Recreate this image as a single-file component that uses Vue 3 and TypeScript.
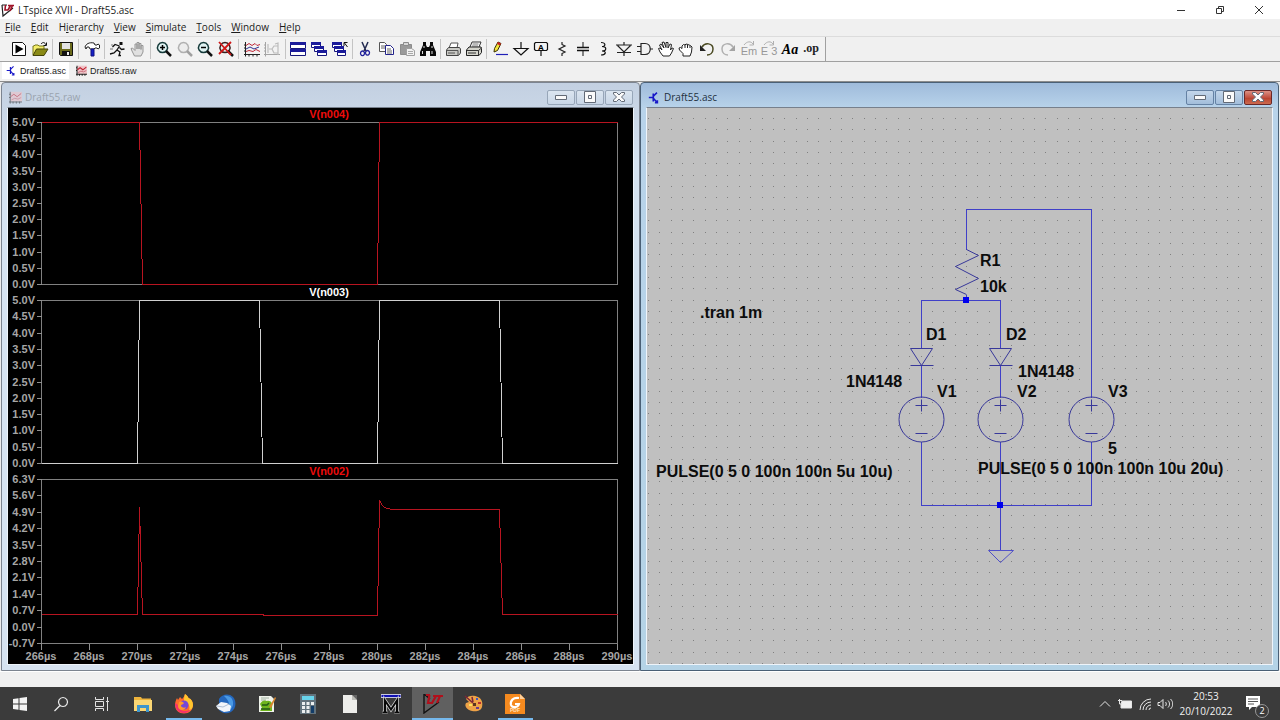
<script setup lang="ts">
import { computed, ref } from 'vue'

interface Shape {
  d?: string
  fill?: string
  stroke?: string
  w?: number
  text?: string
  x?: number
  y?: number
  size?: number
  font?: string
}

const K = '#111'
const N = '#16167a'
const G = '#a4a4a4'

const icons: Record<string, Shape[]> = {
  run: [
    { d: 'M1.5 1.5h10l3 3v10h-13z', fill: '#fff', stroke: K },
    { d: 'M4.5 3.5v9l8-4.500z', fill: '#000' },
  ],
  open: [
    { d: 'M1 14V5h1l1-1h3l1 1h5v3', fill: '#f4ee6a', stroke: '#77771a' },
    { d: 'M1 14.5l3.500-6.500h11.500l-4 6.500z', fill: '#8a8a16', stroke: '#44440a' },
    { d: 'M9 3c2-2.500 4-1.500 5 1M14.500 1.500v3h-3', stroke: K },
  ],
  save: [
    { d: 'M1.500 1.500h13v13h-12l-1-1z', fill: '#6b6b1d', stroke: K },
    { d: 'M4 2h8v6H4z', fill: '#e4e4e4' },
    { d: 'M4 10h8v4.500H4z', fill: '#111' },
    { d: 'M9 11h2v3H9z', fill: '#eee' },
  ],
  hammer: [
    { d: 'M1 6c1-3 4-5 9-4l1 2h2l1-1 1.500 1v3L14 8l-1-1h-2l-1 1H6L5 6 3 6 2 8z', fill: '#fff', stroke: '#222' },
    { d: 'M7 8h3v7H7z', fill: '#1520c8', stroke: '#10107c' },
  ],
  runner: [
    { d: 'M10.500 1h3v3h-3z', fill: K },
    { d: 'M10.500 5L8 9l3 2-1 3.500h2M8 9l-3 3-4 1M10.500 5L6 3.500 3.500 6M10.500 6.500l2 2 3-.500', stroke: K, w: 1.300 },
    { d: 'M2 4h2M1 8h3', stroke: '#777' },
  ],
  stop: [
    { d: 'M4.500 15L2 10 1 7.500 2.500 7 5 9.500V3h2v5-6.500h2V8 2.500h2V8.500 4.500h2V11l-2 4z', fill: '#e0e0e0', stroke: '#969696' },
  ],
  zoomIn: [
    { d: 'M6.500 1.500a5 5 0 1 0 .010 0z', fill: '#dff2f2', stroke: '#153a3a', w: 1.500 },
    { d: 'M10 10l5 5', stroke: K, w: 2.500 },
    { d: 'M4 6.500h5M6.500 4v5', stroke: '#000', w: 1.500 },
  ],
  zoomPan: [
    { d: 'M6.500 1.500a5 5 0 1 0 .010 0z', fill: '#ededed', stroke: '#b0b0b0', w: 1.500 },
    { d: 'M10 10l5 5', stroke: '#a0a0a0', w: 2.500 },
  ],
  zoomOut: [
    { d: 'M6.500 1.500a5 5 0 1 0 .010 0z', fill: '#dff2f2', stroke: '#153a3a', w: 1.500 },
    { d: 'M10 10l5 5', stroke: K, w: 2.500 },
    { d: 'M4 6.500h5', stroke: '#000', w: 1.500 },
  ],
  zoomFit: [
    { d: 'M7 1.500a5 5 0 1 0 .010 0z', fill: '#e8f2f2', stroke: '#3a2020', w: 1.500 },
    { d: 'M10 10l5 5', stroke: K, w: 2.500 },
    { d: 'M1 1l12 13M13 1L1 13', stroke: '#d01818', w: 1.800 },
  ],
  plot: [
    { d: 'M1.500 1v14.500M0 13.500h16M0 4h2M0 7h2M0 10h2M5 13v2.500M9 13v2.500M13 13v2.500', stroke: '#222' },
    { d: 'M2 4.500l3-2 3 2 3-2 2 2 3-1', stroke: '#c02838' },
    { d: 'M2 10.500l3-1 4 1 3-2 4 2', stroke: '#c02838' },
    { d: 'M2 8l4-2 4 2 5-2', stroke: '#303090' },
  ],
  plotGray: [
    { d: 'M1.500 1v14.500M0 13.500h16M0 4h2M0 7h2M0 10h2', stroke: G },
    { d: 'M5 8h3l2-3h4v7h-4L8 8M11 3l3-1v12M4 3v9', stroke: '#bcbcbc', w: 1.200 },
  ],
  tile: [
    { d: 'M.500 1.500h15v6h-15zM.500 8.500h15v6h-15z', fill: '#fff', stroke: N },
    { d: 'M0 1h16v3H0zM0 8h16v3H0z', fill: '#1b1b9a' },
  ],
  cascade: [
    { d: 'M.500 1.500h9v5h-9z', fill: '#fff', stroke: N },
    { d: 'M0 1h10v3H0z', fill: '#1b1b9a' },
    { d: 'M3.500 5.500h9v5h-9z', fill: '#fff', stroke: N },
    { d: 'M3 5h10v3H3z', fill: '#1b1b9a' },
    { d: 'M6.500 9.500h9v5h-9z', fill: '#fff', stroke: N },
    { d: 'M6 9h10v3H6z', fill: '#1b1b9a' },
  ],
  closeAll: [
    { d: 'M.500 1.500h9v5h-9z', fill: '#fff', stroke: N },
    { d: 'M0 1h10v3H0z', fill: '#1b1b9a' },
    { d: 'M2.500 5.500h9v5h-9z', fill: '#fff', stroke: N },
    { d: 'M2 5h10v3H2z', fill: '#1b1b9a' },
    { d: 'M5.500 9.500h8v5h-8z', fill: '#fff', stroke: N },
    { d: 'M5 9h9v3H5z', fill: '#1b1b9a' },
    { d: 'M15.500 6l-3-4M12 5V1.500h3.500', stroke: K },
  ],
  cut: [
    { d: 'M5 1l4 9M11 1L7 10', stroke: '#222a50', w: 1.500 },
    { d: 'M5.500 10a2 2.300 0 1 0 .010 0zM10.500 9.500a2 2.300 0 1 0 .010 0z', stroke: '#20209a', w: 1.300 },
  ],
  copy: [
    { d: 'M1.500 1.500h5l2 2v7h-7z', fill: '#fff', stroke: '#555' },
    { d: 'M3 5h4M3 7h4', stroke: '#666' },
    { d: 'M7.500 4.500h5l3 3v6h-8z', fill: '#fff', stroke: '#22228a' },
    { d: 'M9 8h4M9 10h5M9 12h5', stroke: '#666' },
  ],
  paste: [
    { d: 'M1.500 3.500h11v10h-11z', fill: '#9a9a9a', stroke: '#8c8c8c' },
    { d: 'M4.500 1.500h5v3h-5z', fill: '#d8d8d8', stroke: '#8c8c8c' },
    { d: 'M7.500 7.500h5l3 2v5h-8z', fill: '#f2f2f2', stroke: '#a0a0a0' },
    { d: 'M9 10.500h5M9 12.500h5', stroke: '#a8a8a8' },
  ],
  find: [
    { d: 'M3 1h3v3l1 2h2l1-2V1h3v3l3 7v4h-6v-5H6v5H0v-4l3-7z', fill: '#0a0a0a' },
    { d: 'M4 5v2M12 5v2M2.500 10v3M12 10v3', stroke: '#ddd' },
  ],
  print: [
    { d: 'M4 7l2-5h7l-1 5', fill: '#fff', stroke: '#555' },
    { d: 'M1.500 9l2-2.500h11l1 1.500v4l-2 2.500h-12z', fill: '#c9c9c5', stroke: '#444' },
    { d: 'M1.500 9.500h11.500v4.500M3 12h7', stroke: '#555' },
  ],
  printSetup: [
    { d: 'M4 6l2-5h9l-2 5', fill: '#fff', stroke: '#333' },
    { d: 'M6.500 3h6M6 5h6', stroke: '#777' },
    { d: 'M.500 9L3 6h12l.500 1.500v4L13 14.500H.500z', fill: '#d4d4cc', stroke: '#222' },
    { d: 'M1 9.500h11.500l3-2.500M12.500 9.500v5M2 12h8', stroke: '#333' },
  ],
  wire: [
    { d: 'M2 11l.500-3.500L6 1l3 1.500L5.500 9.500z', fill: '#f4e63c', stroke: '#3a3000' },
    { d: 'M6 1l3 1.500-1 2-3-1.500z', fill: '#c22' },
    { d: 'M4 13.500h12', stroke: '#2020b8', w: 1.200 },
  ],
  ground: [{ d: 'M8 1v6M1 7.500h14L8 14z', stroke: K, w: 1.200 }],
  label: [
    { d: 'M1.500 2.500l1-1h11l1 1v6l-1 1h-11l-1-1zM8 9.500V15', stroke: K, w: 1.200 },
    { text: 'A', x: 8, y: 8.500, size: 8, font: 'sans' },
  ],
  resistor: [{ d: 'M8 1v2.500l3 1.500-6 3 6 3-3 1.500V15', stroke: '#222', w: 1.200 }],
  capacitor: [
    { d: 'M8 1v5M8 10v5', stroke: K },
    { d: 'M2 6.500h12M2 9.500h12', stroke: K, w: 1.600 },
  ],
  inductor: [{ d: 'M6 1.500c5 0 5 4 1 4 5 0 5 4.500 0 4.500 5 0 4 4-1 4', stroke: K, w: 1.200 }],
  diode: [{ d: 'M8 1v3M8 11v4M0 4h16M1.500 4.500L8 11l6.500-6.500M1 11.500h14', stroke: '#222', w: 1.200 }],
  gate: [{ d: 'M0 5.500h4M0 10.500h4M4 2.500h4c7 0 7 11 0 11H4zM13.500 8H16', stroke: '#222', w: 1.200 }],
  move: [
    { d: 'M5 15l-3-4-1.500-3.500L2 7l2 2L1.500 4 3 3l3 4-2-5.500 2-.500 2 5.500L8 1.500h2L10 7l2-4 1.500.500L12.500 9 14 7l1.500.500-2 4.500-2 3z', fill: '#fff', stroke: '#222' },
  ],
  drag: [
    { d: 'M5 15v-2.500L1.500 9 1 7l1.500-.500L4 7.500V5l1.500-1.500L7 4l1-1 2 .500 1 .500 1.500.500L14 6l-.500 5L12 15zM7 4v3M9.500 4v3M12 5v2', fill: '#fff', stroke: '#222' },
  ],
  undo: [
    { d: 'M3 6c3-5 11-4 11 2 0 4-3 6-6 6', stroke: '#4a4a22', w: 1.500 },
    { d: 'M1 4v6h6z', fill: '#222' },
  ],
  redo: [
    { d: 'M13 6C10 1 2 2 2 8c0 4 3 6 6 6', stroke: '#b0b0b0', w: 1.500 },
    { d: 'M15 4v6H9z', fill: G },
  ],
  mirror: [
    { d: 'M3 4c3-4 7-4 9-1M12.500 0v4h-4', stroke: '#b0b0b0' },
    { text: 'Em', x: 8, y: 14, size: 11, font: 'gray' },
  ],
  rotate: [
    { d: 'M3 4c3-4 7-4 9-1M12.500 0v4h-4', stroke: '#b0b0b0' },
    { text: 'E 3', x: 8, y: 14, size: 11, font: 'gray' },
  ],
  text: [{ text: 'Aa', x: 8, y: 13, size: 14, font: 'serif' }],
  op: [{ text: '.op', x: 8, y: 11, size: 12, font: 'op' }],
  asc: [
    { d: 'M1 8h5M6.500 3v10', stroke: '#1818c8', w: 1.800 },
    { d: 'M6.500 6.500L11 2M6.500 9l5 5.500M11.500 11.500v3h-3', stroke: '#1818c8', w: 1.600 },
  ],
  raw: [
    { d: 'M2 1h14v12H2z', fill: '#efc4c8' },
    { d: 'M1.500 1v14.500M0 13.500h16M0 4h2M0 8h2M5 13v2.500M9 13v2.500M13 13v2.500', stroke: '#222', w: 1.500 },
    { d: 'M2 7l4-3 4 3 5-4', stroke: '#c02030', w: 1.600 },
    { d: 'M3 11l4-2 4 1 4-2', stroke: '#c86a78', w: 1.300 },
  ],
}

const toolGroups: [string, string][][] = [
  [['run', 'Run'], ['open', 'Open']],
  [['save', 'Save']],
  [['hammer', 'Control Panel']],
  [['runner', 'Run simulation'], ['stop', 'Halt']],
  [['zoomIn', 'Zoom in'], ['zoomPan', 'Pan'], ['zoomOut', 'Zoom out'], ['zoomFit', 'Zoom full extents']],
  [['plot', 'Autorange'], ['plotGray', 'Pick visible traces']],
  [['tile', 'Tile windows'], ['cascade', 'Cascade windows'], ['closeAll', 'Close all']],
  [['cut', 'Cut'], ['copy', 'Copy'], ['paste', 'Paste'], ['find', 'Find']],
  [['print', 'Print'], ['printSetup', 'Print setup']],
  [
    ['wire', 'Wire'], ['ground', 'Ground'], ['label', 'Label net'], ['resistor', 'Resistor'],
    ['capacitor', 'Capacitor'], ['inductor', 'Inductor'], ['diode', 'Diode'], ['gate', 'Component'],
    ['move', 'Move'], ['drag', 'Drag'], ['undo', 'Undo'], ['redo', 'Redo'],
    ['mirror', 'Mirror'], ['rotate', 'Rotate'], ['text', 'Text'], ['op', 'SPICE directive'],
  ],
]

const menus: [string, string, string][] = [
  ['', 'F', 'ile'], ['', 'E', 'dit'], ['H', 'i', 'erarchy'], ['', 'V', 'iew'],
  ['', 'S', 'imulate'], ['', 'T', 'ools'], ['', 'W', 'indow'], ['', 'H', 'elp'],
]

const docs = [
  { name: 'Draft55.asc', icon: 'asc' },
  { name: 'Draft55.raw', icon: 'raw' },
]
const active = ref('Draft55.asc')

/* Waveform viewer */
interface Pane {
  title: string
  color: string
  line: string
  top: number
  bottom: number
  max: number
  min: number
  step: number
  points: [number, number][]
}
const LEFT = 33
const RIGHT = 609
const panes: Pane[] = [
  {
    title: 'V(n004)', color: '#ee0c0c', line: '#b81420', top: 14, bottom: 176, max: 5, min: 0, step: 0.5,
    points: [[266, 5], [270.1, 5], [270.2, 0], [280, 0], [280.1, 5], [290, 5]],
  },
  {
    title: 'V(n003)', color: '#ffffff', line: '#d0d0d0', top: 192, bottom: 355, max: 5, min: 0, step: 0.5,
    points: [[266, 0], [270, 0], [270.1, 5], [275.1, 5], [275.2, 0], [280, 0], [280.1, 5], [285.1, 5], [285.2, 0], [290, 0]],
  },
  {
    title: 'V(n002)', color: '#ee0c0c', line: '#b81420', top: 371, bottom: 535, max: 6.3, min: -0.7, step: 0.7,
    points: [
      [266, 0.54], [270, 0.54], [270.1, 5.1], [270.2, 0.54], [275.2, 0.54], [275.3, 0.5], [280, 0.5], [280.1, 5.4],
      [280.2, 5.2], [280.3, 5.09], [280.6, 5.02], [285.1, 5], [285.2, 0.54], [290, 0.54],
    ],
  },
]
const timeX = (t: number) => Math.round(LEFT + ((t - 266) * (RIGHT - LEFT)) / 24)
const voltY = (p: Pane, v: number) => Math.round(p.top + ((p.max - v) * (p.bottom - p.top)) / (p.max - p.min))
const timeTicks = Array.from({ length: 13 }, (_, i) => 266 + i * 2)
const plotted = computed(() =>
  panes.map((p) => ({
    ...p,
    trace: p.points.map(([t, v]) => `${timeX(t)},${voltY(p, v)}`).join(' '),
    ticks: Array.from({ length: Math.round((p.max - p.min) / p.step) + 1 }, (_, i) => {
      const v = p.max - i * p.step
      return { y: voltY(p, v), label: (Math.abs(v) < 0.01 ? 0 : v).toFixed(1) + 'V' }
    }),
  })),
)

/* Schematic */
const PITCH = 11.355
const gridDots = Array.from({ length: 49 }, (_, r) =>
  Array.from({ length: 55 }, (_, c) => `M${Math.round(1 + c * PITCH)} ${Math.round(10 + r * PITCH)}h1`).join(''),
).join('')
const sources = [274, 353, 444]
const diodes = [274, 353]
const notes: [string, number, number][] = [
  ['.tran 1m', 53, 210], ['R1', 333, 158], ['10k', 333, 184], ['D1', 279, 232], ['D2', 359, 232],
  ['1N4148', 199, 279], ['1N4148', 371, 269], ['V1', 290, 289], ['V2', 370, 289], ['V3', 461, 289],
  ['5', 461, 346], ['PULSE(0 5 0 100n 100n 5u 10u)', 9, 369], ['PULSE(0 5 0 100n 100n 10u 20u)', 331, 366],
]
</script>

<template>
  <div class="screen">
    <header class="titlebar">
      <svg class="logo" viewBox="0 0 16 16"><path d="M2 3l1 11L13 6M2 3h5" fill="none" stroke="#222" stroke-width="1.200" /><path d="M5.500 3L5 8h3M8 8l2.500-4.500M8 3.500h6M12.500 3.500L10 9" fill="none" stroke="#a01428" stroke-width="1.600" /></svg>
      <h1>LTspice XVII - Draft55.asc</h1>
      <div class="caption">
        <button aria-label="Minimize"><svg viewBox="0 0 10 10"><path d="M1 5.500h8" /></svg></button>
        <button aria-label="Restore"><svg viewBox="0 0 10 10"><path d="M1.500 3.500h5v5h-5zM3.500 3.500v-2h5v5h-2" /></svg></button>
        <button aria-label="Close"><svg viewBox="0 0 10 10"><path d="M1 1l8 8M9 1L1 9" /></svg></button>
      </div>
    </header>

    <nav class="menubar">
      <button v-for="m in menus" :key="m.join('')">{{ m[0] }}<u>{{ m[1] }}</u>{{ m[2] }}</button>
    </nav>

    <div class="toolrow">
      <div class="toolbar">
        <template v-for="(group, gi) in toolGroups" :key="gi">
          <span v-if="gi" class="sep"></span>
          <button v-for="[icon, label] in group" :key="icon" :aria-label="label">
            <svg viewBox="0 0 16 16">
              <template v-for="(s, si) in icons[icon]" :key="si">
                <text v-if="s.text" :x="s.x" :y="s.y" :font-size="s.size" :class="'t-' + s.font" text-anchor="middle">{{ s.text }}</text>
                <path v-else :d="s.d" :fill="s.fill ?? 'none'" :stroke="s.stroke ?? 'none'" :stroke-width="s.w ?? 1" />
              </template>
            </svg>
          </button>
        </template>
      </div>
    </div>

    <div class="tabs">
      <button v-for="doc in docs" :key="doc.name" :class="{ on: doc.name === active }" @click="active = doc.name">
        <svg viewBox="0 0 16 16"><path v-for="(s, si) in icons[doc.icon]" :key="si" :d="s.d" :fill="s.fill ?? 'none'" :stroke="s.stroke ?? 'none'" :stroke-width="s.w ?? 1" /></svg>
        {{ doc.name }}
      </button>
    </div>

    <main class="desktop">
      <section class="window">
        <div class="bar">
          <svg class="doc" viewBox="0 0 16 16"><path v-for="(s, si) in icons.raw" :key="si" :d="s.d" :fill="s.fill ?? 'none'" :stroke="s.stroke ?? 'none'" /></svg>
          <h2>Draft55.raw</h2>
          <button aria-label="Minimize"><svg viewBox="0 0 14 12"><path d="M1.500 4.500h11v4h-11z" /></svg></button>
          <button aria-label="Maximize"><svg viewBox="0 0 14 12"><path d="M1.500 .500h11v11h-11zM5.500 4.500h3v3h-3z" /></svg></button>
          <button aria-label="Close"><svg viewBox="0 0 14 12"><path d="M1.500 1.500h3L7 4l2.500-2.500h3v1.500L9.500 6l3 3v1.500h-3L7 8l-2.500 2.500h-3V9l3-3-3-3z" /></svg></button>
        </div>
        <div class="client black">
          <svg viewBox="0 0 625 556" preserveAspectRatio="xMinYMin meet">
            <g v-for="p in plotted" :key="p.title">
              <g transform="translate(0.500 0.500)" class="lines">
                <rect :x="LEFT" :y="p.top" :width="RIGHT - LEFT" :height="p.bottom - p.top" stroke="#808080" />
                <path v-for="t in p.ticks" :key="t.label" :d="`M28 ${t.y}H${LEFT}`" stroke="#909090" />
                <polyline :points="p.trace" :stroke="p.line" />
              </g>
              <text v-for="t in p.ticks" :key="t.label" class="axis" x="27" :y="t.y + 4" text-anchor="end">{{ t.label }}</text>
              <text class="axis" x="321" :y="p.top - 4" text-anchor="middle" :style="{ fill: p.color }">{{ p.title }}</text>
            </g>
            <g v-for="t in timeTicks" :key="t">
              <path class="lines" :d="`M${timeX(t)} 535v6`" transform="translate(0.500 0.500)" stroke="#909090" />
              <text class="axis" :x="timeX(t)" y="552" text-anchor="middle">{{ t }}µs</text>
            </g>
          </svg>
        </div>
      </section>

      <section class="window focused">
        <div class="bar">
          <svg class="doc" viewBox="0 0 16 16"><path v-for="(s, si) in icons.asc" :key="si" :d="s.d" :fill="s.fill ?? 'none'" :stroke="s.stroke ?? 'none'" stroke-width="2" /></svg>
          <h2>Draft55.asc</h2>
          <button aria-label="Minimize"><svg viewBox="0 0 14 12"><path d="M1.500 4.500h11v4h-11z" /></svg></button>
          <button aria-label="Maximize"><svg viewBox="0 0 14 12"><path d="M1.500 .500h11v11h-11zM5.500 4.500h3v3h-3z" /></svg></button>
          <button class="close" aria-label="Close"><svg viewBox="0 0 14 12"><path d="M1.500 1.500h3L7 4l2.500-2.500h3v1.500L9.500 6l3 3v1.500h-3L7 8l-2.500 2.500h-3V9l3-3-3-3z" /></svg></button>
        </div>
        <div class="client">
          <svg viewBox="0 0 625 556" preserveAspectRatio="xMinYMin meet">
            <path class="lines" :d="gridDots" stroke="#808080" transform="translate(0 0.500)" />
            <g transform="translate(0.500 0.500)">
              <path class="lines" d="M319 141V101H444V289M274 240V192H353V240M319 186V192M274 257V289M353 257V289M274 333V397H444V333M353 333V442" stroke="#4040c8" />
              <g fill="none" stroke="#38389a">
                <path d="M319 141l12 6-23 11 23 12-23 11 11 5" />
                <path v-for="x in diodes" :key="x" :d="`M${x - 11} 240h22L${x} 257zM${x - 11} 257h23`" />
                <g v-for="x in sources" :key="x">
                  <circle :cx="x" cy="311" r="22.500" />
                  <path :d="`M${x - 6} 297h12M${x} 291v12M${x - 6} 325h12`" />
                </g>
                <path d="M341 442h25l-13 12z" stroke="#5050c8" />
              </g>
              <path d="M315.500 188.500h6v6h-6zM349.500 393.500h6v6h-6z" fill="#0000ee" />
            </g>
            <text v-for="(n, i) in notes" :key="i" class="note" :x="n[1]" :y="n[2]">{{ n[0] }}</text>
          </svg>
        </div>
      </section>
    </main>

    <footer class="status"></footer>

    <div class="taskbar">
      <div class="system">
        <button aria-label="Start"><svg viewBox="0 0 20 20"><path d="M3 5l5.500-.800v5.300H3zM9.500 4l7.500-1v6.500H9.500zM3 10.500h5.500v5.300L3 15zM9.500 10.500H17V17l-7.500-1z" fill="#f4f4f4" /></svg></button>
        <button aria-label="Search"><svg viewBox="0 0 20 20"><path d="M12 3.500a4.500 4.500 0 1 0 .010 0zM9 11.500L3.500 17" fill="none" stroke="#eee" stroke-width="1.200" /></svg></button>
        <button aria-label="Task view"><svg viewBox="0 0 20 20"><path d="M3.500 3v2.500h8V3M3.500 7.500h8v5h-8zM3.500 17v-2.500h8V17M15.500 3v14M14 7.500h3" fill="none" stroke="#e4e4e4" /></svg></button>
      </div>
      <div class="apps">
        <button aria-label="File Explorer"><svg viewBox="0 0 20 20"><path d="M1 3h7l1 1.500h9V17H1z" fill="#eeb43c" /><path d="M1 6h18v11H1z" fill="#fbd774" /><path d="M4 18v-7h12v7h-3v-4H7v4z" fill="#3f96cc" /></svg></button>
        <button aria-label="Firefox" class="open"><svg viewBox="0 0 20 20"><path d="M11 0c2 1 3 3 3.500 4 3 1 4.500 4 4.500 7 0 5-4 8.500-9 8.500S1 16 1 11c0-3 1-5 2-7l1 2 2-3 2 2c1-1 2-2 3-5z" fill="#ff6b2c" /><path d="M11 0c2 1 3 3 3.500 4 3 1 4.500 4 4.500 7 0 3-2 5-4 6 2-6-2-9-5-10 0-2 0-4 1-7z" fill="#ffc62e" /><path d="M1 9c0 6 3 10 9 10 3 0 6-2 7-4-5 4-12 2-13-4z" fill="#f5326c" /><circle cx="10" cy="11" r="4.500" fill="#7548d8" /><path d="M5 8c2-1 4 0 5 1-1 2-3 1-3 3 1 2 4 2 5 1-1 4-8 4-8-1z" fill="#ff9a2b" /></svg></button>
        <button aria-label="Thunderbird"><svg viewBox="0 0 20 20"><path d="M3 5C6 0 13-1 17 3c4 5 3 12-2 15-4 2-8 2-12-2z" fill="#2467bd" /><path d="M8 2c6-1 10 3 9 9-1 4-4 6-7 7 5-5 4-11-2-16z" fill="#4b9ae4" /><path d="M0 12l5-4 6 1 4 3-1 5-6 1-6-3z" fill="#f2f5fa" /><path d="M1 12l6 1 6-3" fill="none" stroke="#aebed4" /></svg></button>
        <button aria-label="Notepad++"><svg viewBox="0 0 20 20"><path d="M2 2h12l3 3v13H2z" fill="#f0f3ec" /><path d="M4 4h8M4 6h5" stroke="#a0b0a0" /><path d="M3 10c2-4 5-4 7-3 4-1 6 3 5 6v4H3l2-3z" fill="#6fb51e" /><path d="M5 11h5l2-2M4 15h9" stroke="#235a15" stroke-width="1.500" fill="none" /><path d="M12 13l6-10 1 1-5 10z" fill="#d8862e" /></svg></button>
        <button aria-label="Calculator"><svg viewBox="0 0 20 20"><path d="M2 0h16v20H2z" fill="#62727c" /><path d="M4 2h12v4H4z" fill="#68d4ec" /><path d="M4 8h3v3H4zM8.500 8h3v3h-3zM13 8h3v3h-3zM4 12h3v3H4zM8.500 12h3v3h-3zM4 16h3v3H4zM8.500 16h3v3h-3z" fill="#eceff0" /><path d="M13 12h3v7h-3z" fill="#123c68" /></svg></button>
        <button aria-label="LibreOffice"><svg viewBox="0 0 20 20"><path d="M3 1h9l5 5v13H3z" fill="#ededea" /><path d="M12 1h5v5z" fill="#666" /><path d="M12 1v5h5z" fill="#bdbdb8" /></svg></button>
        <button aria-label="Modelling tool"><svg viewBox="0 0 20 20"><path d="M0 .500h20v3H0z" fill="#1010b4" stroke="#c8c8e0" /><path d="M4 19V6.500l6 9 6-9V19M1.500 18.500h5M13.500 18.500h5" fill="none" stroke="#d8d8d8" stroke-width="3.400" /><path d="M4 19V6.500l6 9 6-9V19M1.500 18.500h5M13.500 18.500h5" fill="none" stroke="#080808" stroke-width="2" /></svg></button>
        <button aria-label="LTspice" class="open current"><svg viewBox="0 0 20 20"><path d="M1 0v19l15-11M1 0l6 5" fill="none" stroke="#111" stroke-width="1.400" /><path d="M3 1h4M6.500 1L5 9h5M9 9l4-7M10 2h10M17 2l-3 7" fill="none" stroke="#b0101c" stroke-width="2.200" /></svg></button>
        <button aria-label="Paint"><svg viewBox="0 0 20 20"><path d="M2 5c2-4 8-4 12-2 4 2 5 6 4 10-1 4-6 5-10 4-5-1-8-5-6-8l3-1z" fill="#eea247" /><path d="M1 2l8 7M8 3l1 5" stroke="#7b2438" stroke-width="1.500" /><path d="M12 4h2v2h-2z" fill="#3b58c4" /><path d="M14 8h3v2h-3z" fill="#b33" /><path d="M12 13h3v2h-3z" fill="#6a3b8d" /><path d="M5 10h3v2H5z" fill="#f8e45c" /><path d="M9 9h3v3H9z" fill="#5c3520" /></svg></button>
        <button aria-label="Foxit" class="open"><svg viewBox="0 0 20 20"><path d="M0 0h15l5 5v15H0z" fill="#f58a1f" /><path d="M15 0v5h5z" fill="#ffd09a" /><path d="M14 4c-6-1-9 3-8 7 1 3 7 3 8-1H10" fill="none" stroke="#fff" stroke-width="2.200" /><text x="10" y="18" text-anchor="middle" font-size="5" fill="#ffe2bd" font-family="Liberation Sans, sans-serif" font-weight="bold">PDF</text></svg></button>
      </div>
      <div class="tray">
        <svg viewBox="0 0 16 16"><path d="M3 10.500l5-5 5 5" /></svg>
        <svg viewBox="0 0 16 16"><path d="M5 5h9.500v7H4V8z" fill="#f0f0f0" /><path d="M1 4.500h4M2.500 3v5h2" /></svg>
        <svg viewBox="0 0 16 16"><path d="M3 14A11 11 0 0 1 14 3M6 14a8 8 0 0 1 8-8M9 14a5 5 0 0 1 5-5M12 14a2 2 0 0 1 2-2" /></svg>
        <svg viewBox="0 0 16 16"><path d="M1 6.500h2l3-3v9l-3-3H1zM8.500 6c1 1 1 3 0 4M11 4.500c2 2 2 5 0 7M13.500 3c3 3 3 7 0 10" /></svg>
        <time datetime="2022-10-20T20:53"><span>20:53</span><span>20/10/2022</span></time>
        <button class="notify" aria-label="Notifications">
          <svg viewBox="0 0 20 20"><path d="M1 2h14v11h-8l-3 3v-3H1z" fill="#fff" stroke="none" /><path d="M3 5h10M3 7.500h10M3 10h6" stroke="#555" /></svg>
          <span class="badge">2</span>
        </button>
      </div>
    </div>
  </div>
</template>

<style>
html, body { height: 100%; }
#app { height: 100%; }
</style>

<style scoped>
.screen { display: flex; flex-direction: column; min-height: 100vh; background: #f0f0f0; color: #1c1c1c; font: 10px/14px "Open Sans", "Noto Sans", sans-serif; }
button { padding: 0; border: 0; background: none; color: inherit; font: inherit; }
h1, h2 { margin: 0; font: inherit; white-space: nowrap; }
svg { display: block; }

.titlebar { display: flex; align-items: center; height: 19px; background: #fff; }
.logo { width: 16px; height: 16px; margin-right: 2px; }
.caption { display: flex; margin-left: auto; padding-right: 2px; }
.caption button { display: grid; place-items: center; width: 39px; height: 19px; }
.caption svg { width: 10px; height: 10px; fill: none; stroke: #333; }

.menubar { display: flex; gap: 10px; height: 17px; padding-left: 5px; border-bottom: 1px solid #dcdcdc; }
.menubar button { line-height: 17px; }
.menubar u { text-underline-offset: 1px; }

.toolrow { display: flex; height: 24px; border-bottom: 1px solid #a0a0a0; }
.toolbar { display: flex; align-items: center; width: 826px; box-sizing: border-box; padding: 0 4px 0 9px; border-right: 1px solid #a0a0a0; background: #f2f2f2; }
.toolbar button { flex: 1; display: grid; place-items: center; height: 22px; min-width: 0; }
.toolbar svg { width: 16px; height: 16px; overflow: visible; }
.sep { width: 1px; height: 20px; margin: 0 2px; background: #c4c4c4; }
.t-sans { font-family: "Liberation Sans", sans-serif; font-weight: bold; }
.t-gray { font-family: "Liberation Sans", sans-serif; fill: #989898; }
.t-serif { font-family: "Liberation Serif", serif; font-weight: bold; font-style: italic; }
.t-op { font-family: "Liberation Serif", serif; font-weight: bold; fill: #222; }

.tabs { display: flex; gap: 3px; height: 19px; padding-left: 2px; font: 9px/16px "Liberation Sans", sans-serif; }
.tabs button { display: flex; align-items: center; gap: 3px; height: 17px; padding: 0 3px 0 4px; }
.tabs .on { background: #fff; }
.tabs svg { width: 11px; height: 11px; }

.desktop { flex: 1; display: grid; grid-template-columns: 1fr 1fr; padding: 0 1px; border-top: 1px solid #8c8c8c; background: #ececec; }
.window { display: flex; flex-direction: column; min-width: 0; border: 1px solid #7c8490; border-radius: 4px 4px 0 0; background: linear-gradient(#c3d0e1, #d6e3f1 80px); }
.focused { border-color: #4a6076; background: linear-gradient(#9fbbdb, #b8d3ea 25px, #b4d3e6); }
.bar { display: flex; align-items: center; gap: 1px; height: 24px; padding: 4px 6px 0 7px; box-sizing: border-box; color: #9aa3ae; }
.focused .bar { color: #23303e; }
.doc { width: 13px; height: 13px; margin-right: 2px; opacity: 0.6; }
.focused .doc { opacity: 1; }
.bar h2 { margin-right: auto; }
.bar button { display: grid; place-items: center; width: 28px; height: 15px; box-sizing: border-box; border: 1px solid #97a6b8; border-radius: 2px; background: linear-gradient(#dbe5f0, #c8d6e6); }
.bar button svg { width: 14px; height: 12px; fill: #fafafa; stroke: #626a76; }
.focused .bar button { border-color: #6582a4; background: linear-gradient(#c3d6ea, #a3bedb); }
.focused .bar .close { border-color: #6a2828; background: linear-gradient(#dc9184, #c25040 50%, #b8402c 51%, #cc6a50); }
.client { flex: 1; margin: 0 5px 5px; border: 1px solid #eef4fa; border-top-color: #77808c; background: #c0c0c0; }
.client svg { width: 100%; }
.black { background: #000; }
.lines { fill: none; shape-rendering: crispEdges; }
.axis { font: bold 11px "Liberation Sans", Arial, sans-serif; fill: #a6a6a6; }
.note { font: bold 16px "Liberation Sans", Arial, sans-serif; fill: #0c0c0c; }

.status { height: 15px; border-top: 1px solid #fff; background: #f0f0f0; }
.taskbar { display: flex; justify-content: space-between; height: 33px; background: #3b3b3b; color: #f2f2f2; }
.system { display: flex; width: 122px; }
.system button { flex: 1; display: grid; place-items: center; }
.system svg { width: 20px; height: 20px; }
.apps { display: flex; width: 414px; margin-right: auto; }
.apps button { flex: 1; display: grid; place-items: center; position: relative; }
.apps svg { width: 20px; height: 20px; }
.open::after { content: ""; position: absolute; left: 3px; right: 3px; bottom: 0; height: 2px; background: #76b9ed; }
.current { background: #606060; }
.current::after { left: 0; right: 0; }
.tray { display: flex; align-items: center; gap: 4px; padding-right: 11px; }
.tray > svg { width: 16px; height: 16px; fill: none; stroke: #e6e6e6; }
.tray time { display: flex; flex-direction: column; align-items: center; width: 54px; margin: 0 8px 0 2px; line-height: 15px; white-space: nowrap; }
.notify { position: relative; width: 24px; height: 24px; }
.notify svg { width: 20px; height: 20px; }
.badge { position: absolute; right: 0; bottom: -2px; width: 12px; height: 12px; border: 1px solid #999; border-radius: 50%; background: #3b3b3b; color: #fff; font-size: 9px; line-height: 12px; text-align: center; }
</style>
